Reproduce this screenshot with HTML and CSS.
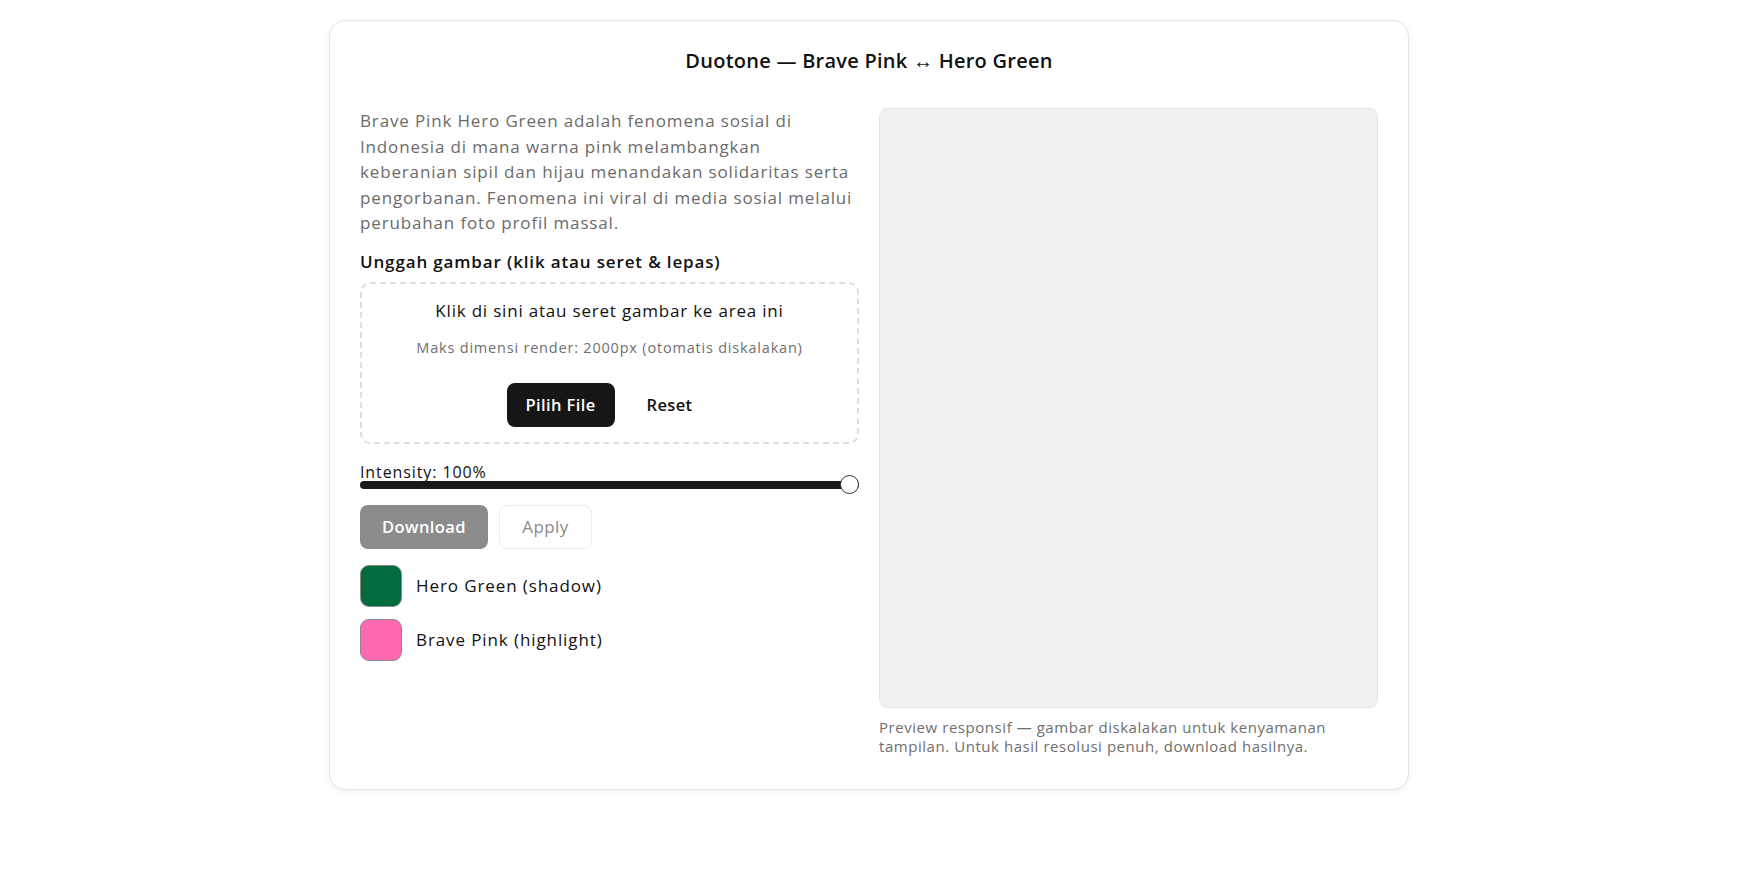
FILE: index.html
```html
<!DOCTYPE html>
<html lang="id">
<head>
  <meta charset="UTF-8">
  <title>Duotone — Brave Pink ↔ Hero Green</title>
  <link rel="stylesheet" href="styles.css">
</head>
<body>

  <div class="card">
    <h1 class="title">Duotone — Brave Pink ↔ Hero Green</h1>

    <div class="columns">
      <div class="controls">
        <p class="intro">Brave Pink Hero Green adalah fenomena sosial di Indonesia di mana warna pink melambangkan keberanian sipil dan hijau menandakan solidaritas serta pengorbanan. Fenomena ini viral di media sosial melalui perubahan foto profil massal.</p>

        <label class="field-label">Unggah gambar (klik atau seret &amp; lepas)</label>
        <div class="dropzone">
          <div class="drop-title">Klik di sini atau seret gambar ke area ini</div>
          <div class="drop-hint">Maks dimensi render: 2000px (otomatis diskalakan)</div>
          <div class="drop-actions">
            <button class="btn btn-dark">Pilih File</button>
            <button class="btn btn-plain">Reset</button>
          </div>
        </div>

        <div class="intensity">
          <label class="intensity-label">Intensity: 100%</label>
          <input type="range" class="slider" min="0" max="100" value="100">
        </div>

        <div class="actions">
          <button class="btn btn-gray">Download</button>
          <button class="btn btn-ghost">Apply</button>
        </div>

        <div class="swatch-row">
          <span class="swatch green"></span>
          <span class="swatch-name">Hero Green (shadow)</span>
        </div>
        <div class="swatch-row">
          <span class="swatch pink"></span>
          <span class="swatch-name">Brave Pink (highlight)</span>
        </div>
      </div>

      <div class="preview-col">
        <div class="preview"></div>
        <p class="caption">Preview responsif — gambar diskalakan untuk kenyamanan tampilan. Untuk hasil resolusi penuh, download hasilnya.</p>
      </div>
    </div>
  </div>

</body>
</html>
```

FILE: styles.css
```css
body {
  margin: 0;
  padding: 20px 0 40px;
  background-color: #fff;
  font-family: "Open Sans", Arial, sans-serif;
  color: #111;
}

.card {
  max-width: 1080px;
  box-sizing: border-box;
  margin: 0 auto;
  padding: 26px 30px 33px;
  background-color: #fff;
  border: 1px solid #e4e4e4;
  border-radius: 16px;
  box-shadow: 0 2px 6px rgba(0,0,0,0.06);
}

.title {
  margin: 0 0 33px;
  font-size: 20px;
  line-height: 28px;
  font-weight: 600;
  letter-spacing: 0.25px;
  text-align: center;
}

.columns {
  display: grid;
  grid-template-columns: 1fr 1fr;
  gap: 20px;
}

.intro {
  margin: 0 0 14px;
  font-size: 17px;
  line-height: 25.5px;
  letter-spacing: 0.85px;
  color: #6b6b6b;
}

.field-label {
  display: block;
  font-size: 17px;
  line-height: 24px;
  font-weight: 600;
  letter-spacing: 0.85px;
  margin-bottom: 8px;
}

.dropzone {
  border: 2px dashed #dedede;
  border-radius: 10px;
  padding: 15px 16px 15px;
  text-align: center;
}

.drop-title {
  font-size: 17px;
  line-height: 24px;
  letter-spacing: 0.8px;
}

.drop-hint {
  margin-top: 15px;
  font-size: 14.5px;
  line-height: 20px;
  letter-spacing: 0.8px;
  color: #6f6f6f;
}

.drop-actions {
  margin-top: 25px;
  display: flex;
  justify-content: center;
  gap: 12px;
}

.btn {
  font-family: inherit;
  font-size: 16.5px;
  font-weight: 600;
  letter-spacing: 0.4px;
  height: 44px;
  padding: 0 18px;
  border-radius: 8px;
  border: none;
  cursor: pointer;
}

.btn-dark {
  width: 108px;
  background-color: #161616;
  color: #fff;
}

.btn-plain {
  width: 86px;
  background: transparent;
  color: #111;
}

.intensity {
  margin-top: 18px;
}

.intensity-label {
  display: block;
  font-size: 16px;
  line-height: 20px;
  font-weight: 500;
  letter-spacing: 0.9px;
}

.slider {
  -webkit-appearance: none;
  appearance: none;
  display: block;
  width: 100%;
  height: 8px;
  margin: -1px 0 0;
  background: #1a1a1a;
  border-radius: 4px;
}

.slider::-webkit-slider-thumb {
  -webkit-appearance: none;
  width: 19px;
  height: 19px;
  border-radius: 50%;
  background: #fff;
  border: 1.5px solid #2f3640;
  box-sizing: border-box;
}

.actions {
  margin-top: 16px;
  display: flex;
  gap: 11px;
}

.btn-gray {
  width: 128px;
  background-color: #8c8c8c;
  color: #fff;
}

.btn-ghost {
  width: 93px;
  background: #fff;
  border: 1px solid #ececec;
  color: #8a8a8a;
  font-weight: 400;
  font-size: 17px;
}

.swatch-row {
  display: flex;
  align-items: center;
  gap: 14px;
  margin-top: 16px;
}

.swatch-row + .swatch-row {
  margin-top: 12px;
}

.swatch {
  width: 42px;
  height: 42px;
  box-sizing: border-box;
  border: 1px solid #8a8a8a;
  border-radius: 9px;
}

.green { background-color: #006b3c; }
.pink { background-color: #ff69b4; }

.swatch-name {
  font-size: 17px;
  letter-spacing: 0.9px;
}

.preview {
  height: 600px;
  box-sizing: border-box;
  background-color: #f1f1f1;
  border: 1px solid #e3e3e3;
  border-radius: 9px;
}

.caption {
  margin: 10px 0 0;
  font-size: 15px;
  line-height: 19px;
  letter-spacing: 0.55px;
  color: #6f6f6f;
}
```
